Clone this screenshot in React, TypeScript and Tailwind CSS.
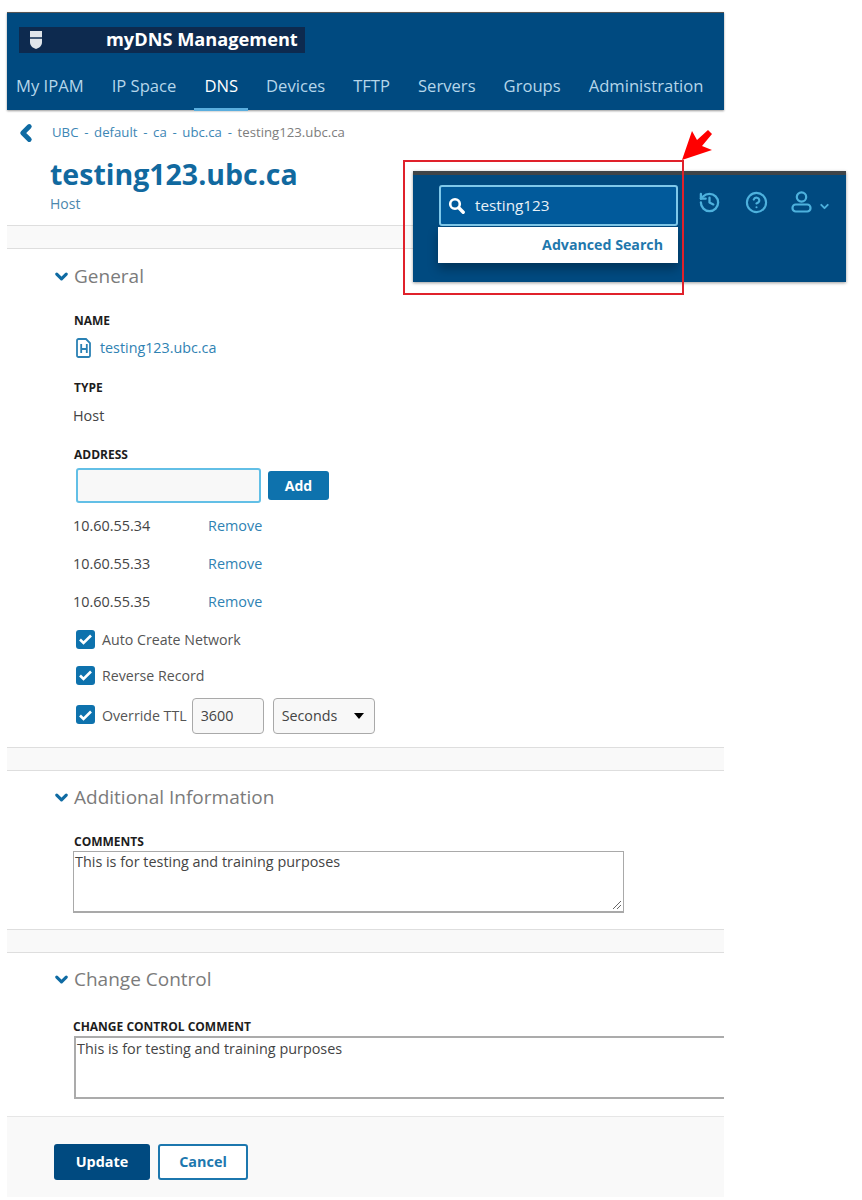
import { ChevronDown, ChevronLeft, CircleHelp, History } from 'lucide-react';

const navItems = ['My IPAM', 'IP Space', 'DNS', 'Devices', 'TFTP', 'Servers', 'Groups', 'Administration'];

function Band({ className = '' }: { className?: string }) {
  return <div className={`h-[24px] bg-[#f9f9f9] border-y border-[#dedede] ${className}`} />;
}

function SectionTitle({ title, className = '' }: { title: string; className?: string }) {
  return (
    <div className={`flex items-center gap-[3px] pl-[45px] h-[28px] ${className}`}>
      <ChevronDown size={19} strokeWidth={4} className="text-[#0f6ba3]" />
      <h2 className="text-[19px] leading-[28px] text-[#7b7b7b]">{title}</h2>
    </div>
  );
}

function FieldLabel({ children, className = '' }: { children: string; className?: string }) {
  return <div className={`text-[12px] leading-[16px] font-bold text-[#1d1d1d] ${className}`}>{children}</div>;
}

function AddressRow({ ip }: { ip: string }) {
  return (
    <div className="flex h-[38px] items-center pl-[66px] text-[14.4px] text-[#444]">
      <span className="w-[135px]">{ip}</span>
      <a className="text-[#2f82b3]">Remove</a>
    </div>
  );
}

function CheckRow({ label, className = '' }: { label: string; className?: string }) {
  return (
    <div className={`flex items-center gap-[7px] text-[14.2px] text-[#555] ${className}`}>
      <span className="flex size-[19px] -translate-y-[1px] items-center justify-center rounded-[3px] bg-[#0e72ad]">
        <svg width="15" height="12" viewBox="0 0 15 12" fill="none">
          <path d="M2 6.5 5.5 10 13 2.5" stroke="white" strokeWidth="2.6" />
        </svg>
      </span>
      <span>{label}</span>
    </div>
  );
}

function HostFileIcon() {
  return (
    <svg width="16" height="20" viewBox="0 0 16 20" fill="none" stroke="#2a81b4" strokeWidth="1.8">
      <path d="M2.5 1h7.5l4 4v12.5a1.5 1.5 0 0 1-1.5 1.5h-10A1.5 1.5 0 0 1 1 17.500V2.500A1.500 1.500 0 0 1 2.500 1Z" />
      <path d="M5.200 6v9M10.800 6v9M5.200 11h5.600" />
    </svg>
  );
}

function SearchGlyph() {
  return (
    <svg width="17" height="17" viewBox="0 0 17 17" fill="none" stroke="white">
      <circle cx="7" cy="7" r="4.800" strokeWidth="2.600" />
      <path d="M10.800 10.800 15.200 15.200" strokeWidth="3.400" strokeLinecap="round" />
    </svg>
  );
}

function UserGlyph() {
  return (
    <svg width="21" height="22" viewBox="0 0 21 22" fill="none" stroke="#4db1dd" strokeWidth="2.200">
      <circle cx="10.500" cy="6" r="4.700" />
      <rect x="1.500" y="13.500" width="18" height="7" rx="3.200" />
    </svg>
  );
}

function SearchInset() {
  return (
    <div className="absolute left-[403px] top-[160px] h-[135px] w-[444px]">
      <div className="absolute left-[10px] top-[11px] h-[111px] w-[433px] border-t-[4px] border-[#3f4448] bg-[#004a80] shadow-[0_1px_3px_rgba(0,0,0,0.4)]">
        <div className="absolute left-[26px] top-[10px] flex h-[41px] w-[239px] items-center gap-[10px] rounded-[3px] border-2 border-[#7fc8ea] bg-[#015a9b] pl-[7px] text-[15.3px] text-[#e8f1f7]">
          <SearchGlyph />
          <span>testing123</span>
        </div>
        <div className="absolute left-[25px] top-[52px] flex h-[36px] w-[240px] items-center justify-end bg-white pr-[15px] text-[14.200px] font-bold text-[#1f78ad] shadow-[0_6px_10px_rgba(0,0,0,0.3)]">
          Advanced Search
        </div>
        <History size={23} strokeWidth={2.4} className="absolute left-[285px] top-[16px] text-[#4db1dd]" />
        <CircleHelp size={23} strokeWidth={2.2} className="absolute left-[332px] top-[16px] text-[#4db1dd]" />
        <div className="absolute left-[378px] top-[16px]">
          <UserGlyph />
        </div>
        <ChevronDown size={13} strokeWidth={3.5} className="absolute left-[405px] top-[25px] text-[#4db1dd]" />
      </div>
      <div className="absolute left-0 top-0 h-[135px] w-[281px] border-2 border-[#e0212b]" />
      <svg className="absolute left-[278px] top-[-31px]" width="34" height="34" viewBox="0 0 34 34">
        <path d="M1 31 11 2 16 11 27 1 31 5 21 17 31 21Z" fill="#f00" />
      </svg>
    </div>
  );
}

export default function App() {
  return (
    <div className="relative h-[1200px] w-[862px] bg-white pt-[12px] pl-[7px] font-['Open_Sans',sans-serif]">
      <div className="w-[717px]">
        <header className="h-[98px] bg-[#004a80] border-t border-[#555] shadow-[0_1px_2px_rgba(0,0,0,0.4)]">
          <div className="ml-[12px] mt-[14px] flex h-[26px] w-[286px] items-center bg-[#0d2a4f]">
            <svg className="ml-[10px]" width="14" height="20" viewBox="0 0 14 20">
              <path d="M1 1h12v11c0 4-3 6-6 7-3-1-6-3-6-7Z" fill="#dfe5ea" />
              <path d="M1 8h12" stroke="#0d2a4f" strokeWidth="1.500" />
            </svg>
            <span className="ml-[63px] text-[18.200px] font-bold whitespace-nowrap text-white">myDNS Management</span>
          </div>
          <nav className="mt-[17px] flex h-[41px] gap-[28px] pl-[9px] text-[16.620px] whitespace-nowrap text-[#b5d6ea]">
            {navItems.map((item) => (
              <a
                key={item}
                className={`flex h-[41px] items-center border-b-[3px] pb-[5px] ${
                  item === 'DNS' ? 'border-[#5aaede] text-white -mx-[10px] px-[10px]' : 'border-transparent'
                }`}
              >
                {item}
              </a>
            ))}
          </nav>
        </header>

        <div className="mt-[14px] flex h-[18px] items-center pl-[6px] text-[13.200px]">
          <ChevronLeft size={26} strokeWidth={4.500} className="text-[#0f6ba3]" />
          <div className="ml-[13px] flex gap-[5.700px] whitespace-nowrap text-[#3d86b5]">
            <span>UBC</span><span>-</span><span>default</span><span>-</span><span>ca</span><span>-</span><span>ubc.ca</span><span>-</span>
            <span className="text-[#7d7d7d]">testing123.ubc.ca</span>
          </div>
        </div>

        <h1 className="mt-[13px] pl-[43px] text-[28.500px] leading-[38px] font-bold text-[#11699f]">testing123.ubc.ca</h1>
        <div className="pl-[43px] text-[14px] leading-[20px] mt-[1px] text-[#4b87ad]">Host</div>
        <Band className="mt-[11px]" />

        <SectionTitle title="General" className="mt-[13px]" />
        <FieldLabel className="ml-[67px] mt-[23px]">NAME</FieldLabel>
        <div className="ml-[69px] mt-[9px] flex h-[20px] items-center gap-[8px] text-[14.300px] text-[#2f82b3]">
          <HostFileIcon />
          <span>testing123.ubc.ca</span>
        </div>
        <FieldLabel className="ml-[67px] mt-[22px]">TYPE</FieldLabel>
        <div className="ml-[66px] mt-[10px] h-[20px] text-[14.400px] leading-[20px] text-[#444]">Host</div>
        <FieldLabel className="ml-[67px] mt-[21px]">ADDRESS</FieldLabel>
        <div className="ml-[69px] mt-[5px] flex items-center gap-[7px]">
          <div className="h-[35px] w-[185px] rounded-[3px] border-2 border-[#62bfe6] bg-[#f8f8f8]" />
          <button className="h-[29px] w-[61px] rounded-[3px] bg-[#0e72ad] text-[14px] font-bold text-white">Add</button>
        </div>
        <div className="mt-[4px]">
          <AddressRow ip="10.60.55.34" />
          <AddressRow ip="10.60.55.33" />
          <AddressRow ip="10.60.55.35" />
        </div>
        <CheckRow label="Auto Create Network" className="ml-[69px] h-[38px]" />
        <CheckRow label="Reverse Record" className="ml-[69px] h-[34px]" />
        <div className="ml-[69px] mt-[5px] flex items-center">
          <CheckRow label="Override TTL" />
          <div className="ml-[5px] flex h-[36px] w-[72px] items-center rounded-[4px] border border-[#a9a9a9] bg-[#f8f8f8] pl-[8px] text-[14.300px] text-[#444]">3600</div>
          <div className="ml-[9px] flex h-[36px] w-[102px] items-center justify-between rounded-[4px] border border-[#a9a9a9] bg-[#f8f8f8] px-[8px] text-[14.300px] text-[#444]">
            <span>Seconds</span>
            <span className="mr-[2px] h-0 w-0 border-x-[5px] border-t-[6px] border-x-transparent border-t-black" />
          </div>
        </div>
        <Band className="mt-[13px]" />

        <SectionTitle title="Additional Information" className="mt-[12px]" />
        <FieldLabel className="ml-[67px] mt-[23px]">COMMENTS</FieldLabel>
        <div className="relative ml-[66px] mt-[1px] h-[62px] w-[551px] border border-b-2 border-[#a9a9a9] pl-[1px] text-[14.400px] leading-[20px] text-[#444]">
          This is for testing and training purposes
          <svg className="absolute right-[1px] bottom-[1px]" width="10" height="10" viewBox="0 0 10 10" stroke="#666">
            <path d="M1 9 9 1M5 9l4-4" />
          </svg>
        </div>
        <Band className="mt-[16px]" />

        <SectionTitle title="Change Control" className="mt-[12px]" />
        <FieldLabel className="ml-[66px] mt-[26px]">CHANGE CONTROL COMMENT</FieldLabel>
        <div className="ml-[67px] mt-[1px] h-[63px] border-2 border-r-0 border-[#ababab] pl-[1px] pt-[1px] text-[14.400px] leading-[20px] text-[#444]">
          This is for testing and training purposes
        </div>

        <div className="mt-[17px] flex h-[81px] items-start gap-[8px] border-t border-[#e6e6e6] bg-[#f9f9f9] pl-[47px] pt-[27px]">
          <button className="h-[36px] w-[96px] rounded-[3px] bg-[#004a80] text-[14.400px] font-bold text-white">Update</button>
          <button className="h-[36px] w-[90px] rounded-[3px] border-2 border-[#1c77ae] bg-white text-[14.400px] font-bold text-[#1c77ae]">Cancel</button>
        </div>
      </div>
      <SearchInset />
    </div>
  );
}
